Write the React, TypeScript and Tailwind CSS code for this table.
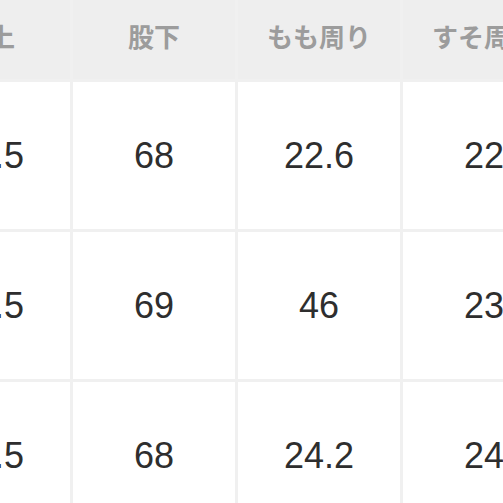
const headers = ["股上", "股下", "もも周り", "すそ周り"];

const rows = [
  ["25.5", "68", "22.6", "22"],
  ["25.5", "69", "46", "23"],
  ["25.5", "68", "24.2", "24"],
];

export default function App() {
  return (
    <div className="w-[503px] h-[503px] overflow-hidden bg-white">
      <div
        className="ml-[-92px] w-[657px] grid grid-cols-[162px_162px_162px_162px] gap-[3px] bg-[#f0f0f0]"
        style={{ fontFamily: '"Liberation Sans", Arial, sans-serif' }}
      >
        {headers.map((h) => (
          <div
            key={h}
            className="h-[79px] bg-[#eeeeee] flex items-center justify-center pb-[9px] text-[26px] font-bold text-[#9c9c9c] whitespace-nowrap"
            style={{ fontFamily: '"Noto Sans CJK JP", sans-serif' }}
          >
            {h}
          </div>
        ))}
        {rows.map((row, i) =>
          row.map((v, j) => (
            <div
              key={`${i}-${j}`}
              className="h-[147px] bg-white flex items-center justify-center text-[36px] text-[#2e2e2e] whitespace-nowrap"
            >
              {v}
            </div>
          ))
        )}
      </div>
    </div>
  );
}
